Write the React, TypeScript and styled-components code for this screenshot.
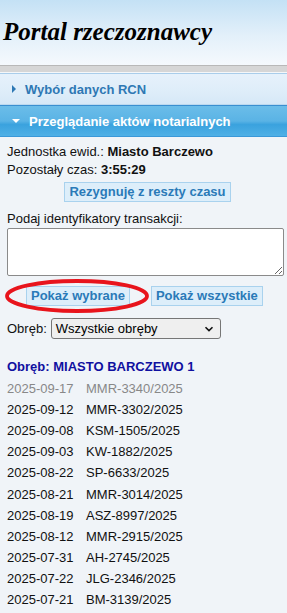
import React from "react";
import styled, { createGlobalStyle } from "styled-components";

const Global = createGlobalStyle`
  html, body { margin: 0; padding: 0; }
  body { background: #f0f4f8; font-family: "Liberation Sans", Arial, sans-serif; font-size: 13px; color: #111; }
`;

const Page = styled.div`
  width: 287px;
  min-height: 613px;
  background: #f0f4f8;
  overflow: hidden;
`;

const Header = styled.header`
  height: 65px;
  background: linear-gradient(to bottom, #c4e1f5 0%, #e3f0fa 55%, #f5f9fd 100%);
  display: flex;
  align-items: center;
  padding: 0 0 0 3px;
`;

const Title = styled.h1`
  margin: 0;
  font-family: "Liberation Serif", "Times New Roman", serif;
  font-style: italic;
  font-weight: bold;
  font-size: 25px;
  color: #000;
  white-space: nowrap;
  position: relative;
  top: -1px;
`;

const Divider = styled.div`
  height: 6px;
  background: #d6d6d6;
  border-top: 1px solid #b8b8b8;
  border-bottom: 1px solid #f5f7f9;
`;

const PanelHead = styled.div<{ $active?: boolean }>`
  height: 30px;
  display: flex;
  align-items: center;
  gap: 9px;
  padding-left: 12px;
  font-weight: bold;
  font-size: 13px;
  border-top: 1px solid ${(p) => (p.$active ? "#3a8fd0" : "#a9cdea")};
  border-bottom: 1px solid ${(p) => (p.$active ? "#3a98d8" : "#bcd9ef")};
  background: ${(p) =>
    p.$active
      ? "linear-gradient(to bottom, #6bbde9 0%, #5ab3e5 50%, #3aa2de 62%, #4fb0e6 100%)"
      : "linear-gradient(to bottom, #e6f1fb 0%, #deedf9 60%, #d6e8f7 100%)"};
  color: ${(p) => (p.$active ? "#ffffff" : "#2e78b4")};
`;

const Arrow = styled.span<{ $down?: boolean }>`
  width: 0;
  height: 0;
  ${(p) =>
    p.$down
      ? `border-left: 4px solid transparent; border-right: 4px solid transparent; border-top: 4px solid #ffffff;`
      : `border-top: 4px solid transparent; border-bottom: 4px solid transparent; border-left: 4px solid #2e78b4;`}
`;

const Content = styled.div`
  padding: 6px 3px 0 7px;
  display: flex;
  flex-direction: column;
`;

const InfoLine = styled.div`
  line-height: 18px;
  height: 18px;
`;

const Bold = styled.b`
  font-weight: bold;
`;

const CenterRow = styled.div`
  display: flex;
  justify-content: center;
  margin-top: 3px;
  padding-left: 4px;
`;

const Btn = styled.button`
  font-family: "Liberation Sans", Arial, sans-serif;
  font-weight: bold;
  font-size: 13px;
  color: #2a7ab8;
  background: #ddeefa;
  border: 1px solid #a9d2ee;
  padding: 1px 4px;
  height: 20px;
  line-height: 16px;
  cursor: pointer;
`;

const Label = styled.div`
  margin-top: 9px;
  line-height: 16px;
`;

const TextArea = styled.textarea`
  box-sizing: border-box;
  width: 277px;
  height: 48px;
  margin-top: 1px;
  border: 1px solid #8a8a8a;
  border-radius: 2px;
  background: #fff;
  resize: vertical;
  display: block;
`;

const ButtonsRow = styled.div`
  position: relative;
  display: flex;
  gap: 21px;
  padding-left: 19px;
  margin-top: 10px;
`;

const Ellipse = styled.svg`
  position: absolute;
  left: -3px;
  top: -10px;
  pointer-events: none;
`;

const FilterRow = styled.div`
  display: flex;
  align-items: center;
  gap: 4px;
  margin-top: 12px;
`;

const Select = styled.div`
  box-sizing: border-box;
  width: 170px;
  height: 21px;
  border: 1px solid #767676;
  border-radius: 3px;
  background: #efefef;
  display: flex;
  align-items: center;
  justify-content: space-between;
  padding: 0 6px 0 4px;
  font-size: 13px;
  color: #000;
`;

const SectionTitle = styled.div`
  margin-top: 19px;
  font-weight: bold;
  color: #1010a0;
  line-height: 18px;
`;

const List = styled.div`
  display: grid;
  grid-template-columns: 79px auto;
  grid-auto-rows: 21.1px;
  align-items: center;
  margin-top: 2px;
`;

const Cell = styled.div<{ $muted?: boolean }>`
  color: ${(p) => (p.$muted ? "#888888" : "#111111")};
  white-space: nowrap;
`;

const rows: [string, string][] = [
  ["2025-09-17", "MMR-3340/2025"],
  ["2025-09-12", "MMR-3302/2025"],
  ["2025-09-08", "KSM-1505/2025"],
  ["2025-09-03", "KW-1882/2025"],
  ["2025-08-22", "SP-6633/2025"],
  ["2025-08-21", "MMR-3014/2025"],
  ["2025-08-19", "ASZ-8997/2025"],
  ["2025-08-12", "MMR-2915/2025"],
  ["2025-07-31", "AH-2745/2025"],
  ["2025-07-22", "JLG-2346/2025"],
  ["2025-07-21", "BM-3139/2025"],
];

export default function App() {
  return (
    <Page>
      <Global />
      <Header>
        <Title>Portal rzeczoznawcy</Title>
      </Header>
      <Divider />
      <PanelHead>
        <Arrow />
        Wybór danych RCN
      </PanelHead>
      <PanelHead $active>
        <Arrow $down />
        Przeglądanie aktów notarialnych
      </PanelHead>
      <Content>
        <InfoLine>
          Jednostka ewid.: <Bold>Miasto Barczewo</Bold>
        </InfoLine>
        <InfoLine>
          Pozostały czas: <Bold>3:55:29</Bold>
        </InfoLine>
        <CenterRow>
          <Btn>Rezygnuję z reszty czasu</Btn>
        </CenterRow>
        <Label>Podaj identyfikatory transakcji:</Label>
        <TextArea />
        <ButtonsRow>
          <Ellipse width="146" height="40" viewBox="0 0 146 40">
            <ellipse cx="73" cy="20" rx="70" ry="15" fill="none" stroke="#e8141c" strokeWidth="3.8" />
          </Ellipse>
          <Btn>Pokaż wybrane</Btn>
          <Btn>Pokaż wszystkie</Btn>
        </ButtonsRow>
        <FilterRow>
          <span>Obręb:</span>
          <Select>
            <span>Wszystkie obręby</span>
            <svg width="10" height="6" viewBox="0 0 10 6">
              <path d="M1.5 1.2 L5 4.6 L8.5 1.2" fill="none" stroke="#111" strokeWidth="1.6" />
            </svg>
          </Select>
        </FilterRow>
        <SectionTitle>Obręb: MIASTO BARCZEWO 1</SectionTitle>
        <List>
          {rows.map(([d, c], i) => (
            <React.Fragment key={c}>
              <Cell $muted={i === 0}>{d}</Cell>
              <Cell $muted={i === 0}>{c}</Cell>
            </React.Fragment>
          ))}
        </List>
      </Content>
    </Page>
  );
}
